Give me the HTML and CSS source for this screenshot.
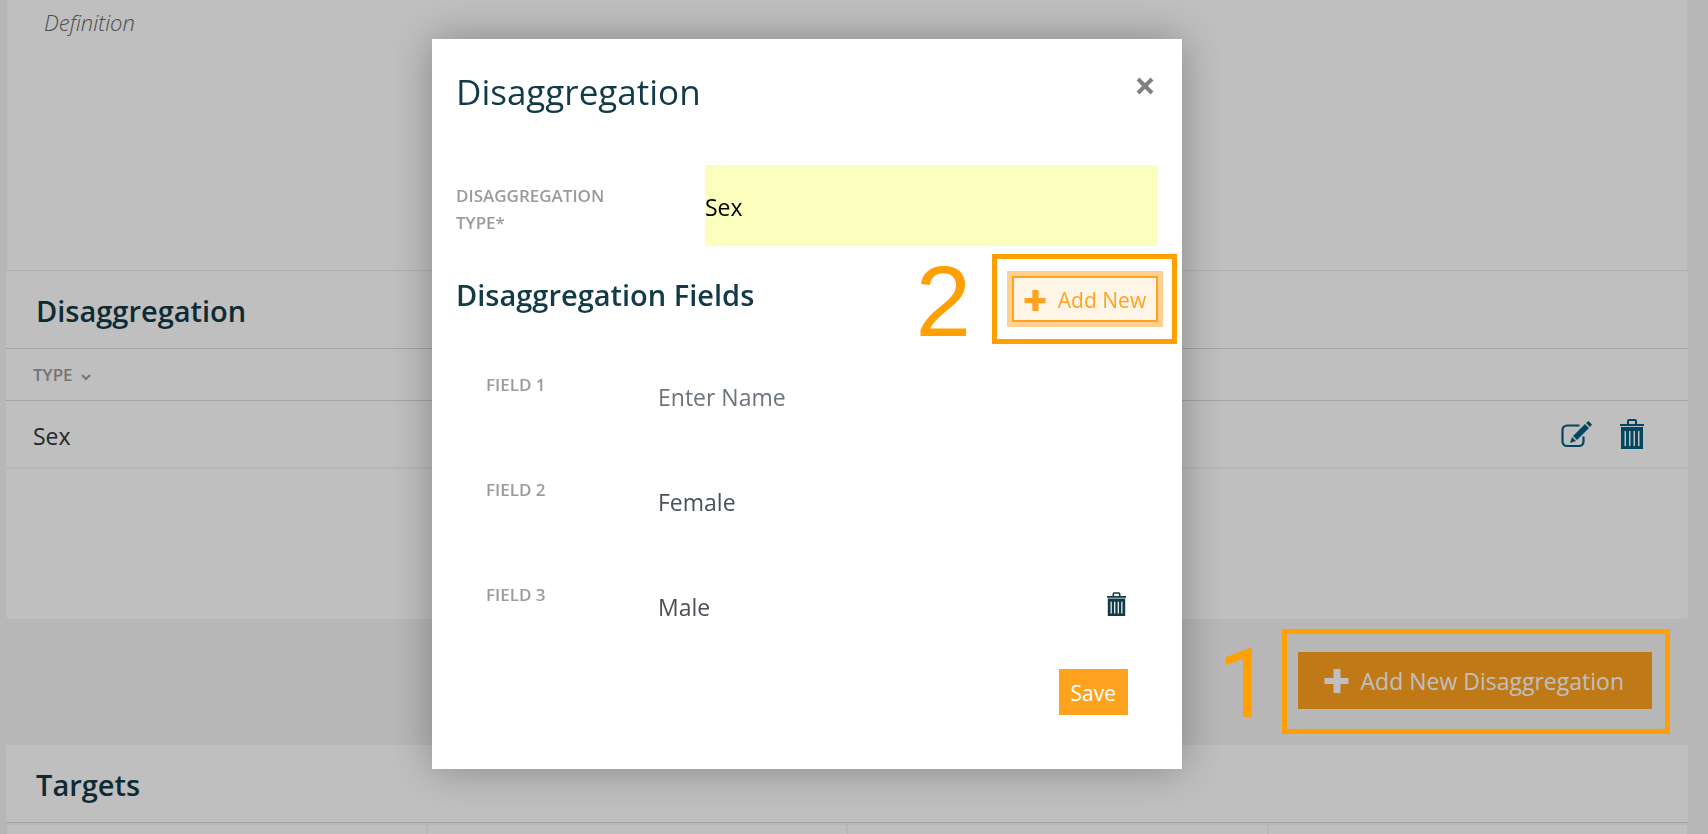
FILE: index.html
```html
<!DOCTYPE html>
<html lang="en">
<head>
<meta charset="utf-8">
<title>Disaggregation</title>
<link rel="stylesheet" href="styles.css">
</head>
<body>
<svg class="sprite" aria-hidden="true">
  <symbol id="plus" viewBox="0 0 24 24"><path d="M9 0h7v9h8v6h-8v9H9v-9H0V9h9z"/></symbol>
  <symbol id="trash" viewBox="0 0 24 30"><path fill-rule="evenodd" d="M7 5V2a2 2 0 0 1 2-2h6a2 2 0 0 1 2 2v3h7v2H0V5zM9 5h6V2H9zM1 8h22v22H1zM4.500 12v15H6V12zM9 12v15h1.500V12zM13.500 12v15H15V12zM18 12v15h1.500V12z"/></symbol>
  <symbol id="edit" viewBox="0 0 31 27"><path fill="none" stroke="currentColor" stroke-width="2.200" d="M18.500 4.500H6A4.500 4.500 0 0 0 1.500 9V20.500A4.500 4.500 0 0 0 6 25h12a4.500 4.500 0 0 0 4.500-4.500v-5"/><path d="M9 22l2-6 4 4zM12 15L24 3l4 4L16 19zM25 2L27.500 0 31 3.500 29 6z"/></symbol>
</svg>

<main class="page">
  <section class="card definition">
    <p class="definition-text">Definition</p>
  </section>

  <section class="card disaggregation">
    <h2 class="card-title">Disaggregation</h2>
    <table class="types">
      <thead>
        <tr><th scope="col">TYPE <svg class="chevron" viewBox="0 0 10 7" aria-hidden="true"><path d="M1 1l4 4 4-4"/></svg></th><th></th></tr>
      </thead>
      <tbody>
        <tr>
          <td>Sex</td>
          <td class="actions">
            <button class="icon-button" aria-label="Edit"><svg class="icon-edit"><use href="#edit"/></svg></button>
            <button class="icon-button" aria-label="Delete"><svg class="icon-trash"><use href="#trash"/></svg></button>
          </td>
        </tr>
      </tbody>
    </table>
  </section>

  <div class="toolbar">
    <div class="callout callout-page">
      <button class="button button-large"><svg class="icon-plus"><use href="#plus"/></svg>Add New Disaggregation</button>
      <span class="frame"></span>
      <span class="step">1</span>
    </div>
  </div>

  <section class="card targets">
    <h2 class="card-title">Targets</h2>
    <div class="target-columns"><div></div><div></div><div></div><div></div></div>
  </section>
</main>

<div class="backdrop">
  <form class="modal" role="dialog" aria-labelledby="modal-title">
    <header class="modal-header">
      <h1 class="modal-title" id="modal-title">Disaggregation</h1>
      <button type="button" class="close" aria-label="Close"><svg viewBox="0 0 18 18"><path d="M2 2l14 14M16 2L2 16"/></svg></button>
    </header>

    <div class="type-row">
      <label class="label" for="type">DISAGGREGATION TYPE*</label>
      <input class="input input-filled" id="type" value="Sex">
    </div>

    <div class="fields-header">
      <h2 class="fields-title">Disaggregation Fields</h2>
      <div class="callout callout-modal">
        <button type="button" class="button button-outline"><svg class="icon-plus"><use href="#plus"/></svg>Add New</button>
        <span class="frame"></span>
        <span class="step">2</span>
      </div>
    </div>

    <div class="fields">
      <div class="field">
        <label class="label" for="field-1">FIELD 1</label>
        <input class="input" id="field-1" placeholder="Enter Name">
      </div>
      <div class="field">
        <label class="label" for="field-2">FIELD 2</label>
        <input class="input" id="field-2" value="Female">
      </div>
      <div class="field">
        <label class="label" for="field-3">FIELD 3</label>
        <input class="input" id="field-3" value="Male">
        <button type="button" class="icon-button remove" aria-label="Remove field 3"><svg class="icon-trash-small"><use href="#trash"/></svg></button>
      </div>
    </div>

    <footer class="modal-footer"><button class="button button-save">Save</button></footer>
  </form>
</div>
</body>
</html>
```

FILE: styles.css
```css
* { box-sizing: border-box; }

body {
  margin: 0;
  background: #f4f4f4;
  color: #333;
  font: 23px/32px "Open Sans", "Noto Sans", sans-serif;
}

h1, h2, p { margin: 0; }

button, input { font: inherit; border: 0; }

button { padding: 0; cursor: pointer; }

svg { display: block; fill: currentColor; }

.sprite { position: absolute; width: 0; height: 0; }

/* Page behind the dialog */
.page {
  display: flex;
  flex-direction: column;
  height: 100vh;
  padding: 0 20px 0 6px;
  overflow: hidden;
}

.card { background: #fff; flex: none; }

.definition { margin: 0 1px; min-height: 270px; padding: 6px 37px; }

.definition-text { color: #666; font-size: 22px; font-style: italic; font-weight: 300; }

.disaggregation {
  min-height: 349px;
  border-top: 1px solid #eaeaea;
  border-radius: 0 0 4px 4px;
}

.card-title {
  padding: 20px 30px 17px;
  color: #123a47;
  font-size: 29px;
  font-weight: 600;
  line-height: 40px;
  border-bottom: 1px solid #dadada;
}

.types { width: 100%; border-collapse: separate; border-spacing: 0; text-align: left; }

.types th {
  height: 52px;
  padding: 0 27px;
  color: #9b9b9b;
  font-size: 17px;
  font-weight: 600;
  border-bottom: 1px solid #dadada;
}

.types td { height: 68px; padding: 3px 27px 0; border-bottom: 2px solid #f4f4f4; }

.chevron {
  display: inline-block;
  width: 10px;
  height: 7px;
  margin-left: 4px;
  fill: none;
  stroke: currentColor;
  stroke-width: 2;
}

.types .actions {
  display: flex;
  align-items: center;
  justify-content: flex-end;
  gap: 28px;
  padding: 0 44px 0 0;
}

.icon-button { background: none; color: #005f7f; }

.icon-edit { width: 31px; height: 27px; }
.icon-trash { width: 24px; height: 30px; }
.icon-trash-small { width: 19px; height: 24px; }

.toolbar { display: flex; justify-content: flex-end; flex: none; padding: 33px 36px 36px; }

.targets { display: flex; flex-direction: column; flex: 1 0 auto; }

.target-columns {
  display: grid;
  flex: 1;
  grid-template-columns: repeat(4, 1fr);
  gap: 2px;
  padding: 2px 1px 0;
  background: #f4f4f4;
}

.target-columns div { background: #fff; }

/* Buttons */
.button {
  display: flex;
  align-items: center;
  justify-content: center;
  padding: 2px 12px 0;
  background: #ffa21f;
  color: #fff;
}

.button-large { gap: 12px; min-height: 57px; padding: 0 28px 0 26px; }
.button-large .icon-plus { width: 25px; height: 24px; }

.button-outline {
  gap: 12px;
  width: 146px;
  min-height: 46px;
  padding: 2px 0 0;
  border: 2px solid #ffa21f;
  background: #fff5e7;
  box-shadow: 0 0 0 5px #ffd08f;
  color: #ffa21f;
  font-size: 21px;
}

.button-outline .icon-plus { width: 22px; height: 21px; }

.button-save { min-height: 46px; font-size: 21px; }

/* Numbered callouts */
.callout { position: relative; }

.frame, .step { position: absolute; z-index: 20; pointer-events: none; }

.frame { border: 5px solid #ffa000; }

.step { color: #ffa000; }

.callout-page .frame { inset: -23px -18px -25px -16px; }
.callout-page .step { top: -16px; right: calc(100% + 26px); font: 96px/96px Roboto, sans-serif; }
.callout-modal .frame { inset: -22px -19px -22px -20px; }
.callout-modal .step { top: -23px; right: calc(100% + 41px); font: 100px/96px "Liberation Sans", Arial, sans-serif; }

/* Dialog */
.backdrop {
  position: fixed;
  inset: 0;
  z-index: 10;
  display: flex;
  align-items: flex-start;
  justify-content: center;
  padding: 39px 94px 0 0;
  background: rgba(0, 0, 0, 0.25);
}

.modal {
  width: 750px;
  padding: 29px 24px 54px;
  background: #fff;
  box-shadow: 0 0 40px rgba(0, 0, 0, 0.3);
}

.modal-header { display: flex; justify-content: space-between; margin-bottom: 49px; }

.modal-title { color: #123a47; font-size: 35px; font-weight: 400; line-height: 48px; }

.close { align-self: flex-start; padding: 9px 4px; background: none; color: #808080; }
.close svg { width: 18px; height: 18px; stroke: currentColor; stroke-width: 4; }

.label {
  padding-top: 17px;
  color: #9b9b9b;
  font-size: 17px;
  font-weight: 600;
  line-height: 27px;
}

.input {
  width: 100%;
  min-width: 0;
  height: 81px;
  padding: 0;
  background: none;
  color: #495057;
}

.input::placeholder { color: #6c757d; opacity: 1; }

.input-filled { padding-top: 2px; background: #faffbd; color: #000; }

.type-row { display: grid; grid-template-columns: 200px 1fr; column-gap: 49px; }

.fields-header {
  display: flex;
  align-items: flex-start;
  justify-content: space-between;
  padding: 30px 0 34px;
}

.fields-title { color: #123a47; font-size: 29px; font-weight: 600; line-height: 38px; }

.fields { display: grid; gap: 24px; padding: 0 30px; }

.field { display: grid; grid-template-columns: 172px 1fr auto; }

.field .label { padding-top: 15px; }

.remove { padding: 0 2px 6px; color: #123a47; }

.modal-footer { display: flex; justify-content: flex-end; padding: 22px 30px 0; }
```
